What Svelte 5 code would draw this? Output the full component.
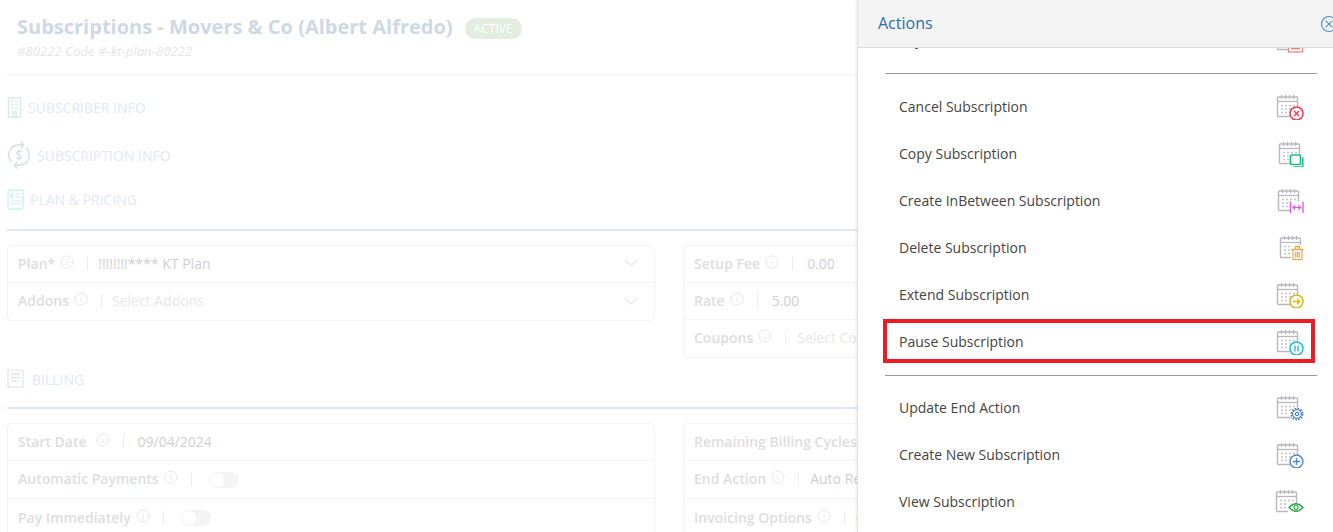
<script>
  const planLeft = [
    { label: 'Plan*', value: '!!!!!!!!**** KT Plan', select: true },
    { label: 'Addons', placeholder: 'Select Addons', select: true }
  ];
  const planRight = [
    { label: 'Setup Fee', value: '0.00', num: true },
    { label: 'Rate', value: '5.00', num: true },
    { label: 'Coupons', placeholder: 'Select Coupons' }
  ];
  const billLeft = [
    { label: 'Start Date', value: '09/04/2024', num: true, spaced: true },
    { label: 'Automatic Payments', toggle: true },
    { label: 'Pay Immediately', toggle: true }
  ];
  const billRight = [
    { label: 'Remaining Billing Cycles', value: '12' },
    { label: 'End Action', value: 'Auto Renew' },
    { label: 'Invoicing Options', value: 'Consolidated' }
  ];

  const firstGroup = [
    { name: 'Cancel Subscription', kind: 'cancel', dx: 0 },
    { name: 'Copy Subscription', kind: 'copy', dx: 2 },
    { name: 'Create InBetween Subscription', kind: 'between', dx: 1 },
    { name: 'Delete Subscription', kind: 'delete', dx: 3 },
    { name: 'Extend Subscription', kind: 'extend', dx: 0 },
    { name: 'Pause Subscription', kind: 'pause', dx: 0, marked: true }
  ];
  const secondGroup = [
    { name: 'Update End Action', kind: 'update', dx: 0 },
    { name: 'Create New Subscription', kind: 'create', dx: 0 },
    { name: 'View Subscription', kind: 'view', dx: -1 }
  ];
</script>

{#snippet info(spaced)}
  <svg class="info" class:spaced width="14" height="14" viewBox="0 0 14 14">
    <circle cx="7" cy="7" r="6" fill="none" stroke="#e8e8e8" />
    <path d="M7 6v4.500M7 3.500v1.200" stroke="#e8e8e8" fill="none" />
  </svg>
{/snippet}

{#snippet fields(rows, tall)}
  <div class="box" class:tall>
    {#each rows as row}
      <div class="field">
        <span class="label">{row.label}</span>
        {@render info(row.spaced)}
        <span class="divider" class:num={row.num} class:select={row.select}></span>
        {#if row.toggle}
          <span class="toggle"><span class="knob"></span></span>
        {:else if row.placeholder}
          <span class="placeholder">{row.placeholder}</span>
        {:else}
          <span class="value">{row.value}</span>
        {/if}
        {#if row.select}
          <svg class="chevron" width="14" height="8" viewBox="0 0 14 8">
            <path d="M1 1l6 6 6-6" fill="none" stroke="#e8e8e8" stroke-width="1.2" />
          </svg>
        {/if}
      </div>
    {/each}
  </div>
{/snippet}

{#snippet actionIcon(kind, dx)}
  <svg class="cal" width="32" height="27" viewBox="0 0 32 27">
    <g transform="translate({dx} 0)">
      <rect x="3.5" y="4" width="20" height="19.5" rx="1" fill="#fff" stroke="#b8b8be" stroke-width="1.4" />
      <path d="M3.5 8.5h20" stroke="#b8b8be" stroke-width="1.3" />
      <path d="M7.5 2v4M11.5 2v4M15.5 2v4M19.5 2v4" stroke="#b8b8be" stroke-width="1.2" />
      <path d="M7 12.500h2M11 12.500h2M15 12.500h2M19 12.500h2M7 16h2M11 16h2M15 16h2M7 19.500h2M11 19.500h2" stroke="#c4c4ca" stroke-width="1.4" />

      {#if kind === 'invoice'}
        <rect x="14.500" y="10" width="14" height="16" fill="#fff" stroke="#f27d7d" stroke-width="1.200" />
        <path d="M17 22.500h9" stroke="#f27d7d" stroke-width="1.600" />
      {:else if kind === 'cancel'}
        <circle cx="22.500" cy="20.500" r="6.500" fill="#fff" stroke="#ee3b4d" stroke-width="1.500" />
        <path d="M20 18l5 5M25 18l-5 5" stroke="#ee3b4d" stroke-width="1.400" />
      {:else if kind === 'copy'}
        <rect x="14.500" y="15" width="10" height="9.500" rx="1.500" fill="#fff" stroke="#1fbb86" stroke-width="1.700" />
        <path d="M26.800 17.500v7.500a2 2 0 0 1-2 2h-7.500" fill="none" stroke="#1fbb86" stroke-width="1.500" />
      {:else if kind === 'between'}
        <rect x="15.500" y="14" width="12.500" height="12" fill="#fff" />
        <path d="M15.500 14.500v11.500M28 14.500v11.500" stroke="#e94fe6" stroke-width="1.300" />
        <path d="M18 20.500h7.500M20.200 18.300l-2.200 2.200 2.200 2.200M23.300 18.300l2.200 2.200-2.200 2.200" fill="none" stroke="#e94fe6" stroke-width="1.200" />
      {:else if kind === 'delete'}
        <rect x="14" y="11" width="14" height="15.500" fill="#fff" />
        <path d="M14.500 15.500h12M18.500 15v-2.500h4v2.500" fill="none" stroke="#f0a63c" stroke-width="1.400" />
        <path d="M16 16v9.500h9V16M18.700 18v5.500M20.500 18v5.500M22.300 18v5.500" fill="none" stroke="#f0a63c" stroke-width="1.200" />
      {:else if kind === 'extend'}
        <circle cx="22.500" cy="20.500" r="6.500" fill="#fff" stroke="#dcb61b" stroke-width="1.500" />
        <path d="M19 20.500h6.500M23 17.800l2.700 2.700-2.700 2.700" fill="none" stroke="#dcb61b" stroke-width="1.300" />
      {:else if kind === 'pause'}
        <circle cx="22.500" cy="20.500" r="6.500" fill="#fff" stroke="#25bcdc" stroke-width="1.500" />
        <path d="M21 17.500v6M24 17.500v6" fill="none" stroke="#25bcdc" stroke-width="1.400" />
      {:else if kind === 'update'}
        <circle cx="23" cy="20" r="6.500" fill="#fff" />
        <circle cx="23" cy="20" r="5.600" fill="none" stroke="#2f6fcb" stroke-width="1.600" stroke-dasharray="1.500 1.430" />
        <circle cx="23" cy="20" r="4.300" fill="#fff" stroke="#2f6fcb" stroke-width="1" />
        <circle cx="23" cy="20" r="1.700" fill="none" stroke="#2f6fcb" stroke-width="1" />
      {:else if kind === 'create'}
        <circle cx="22.500" cy="20.500" r="6.500" fill="#fff" stroke="#4a86e0" stroke-width="1.400" />
        <path d="M22.500 17v7M19 20.500h7" stroke="#4a86e0" stroke-width="1.300" />
      {:else if kind === 'view'}
        <rect x="15" y="15" width="15" height="10" fill="#fff" />
        <path d="M16 19.500q7-7.500 14 0q-7 7.500-14 0z" fill="#fff" stroke="#2aa84a" stroke-width="1.400" />
        <circle cx="23" cy="19.500" r="2" fill="none" stroke="#2aa84a" stroke-width="1.200" />
      {/if}
    </g>
  </svg>
{/snippet}

{#snippet action(item)}
  <div class="action">
    <span>{item.name}</span>
    {@render actionIcon(item.kind, item.dx)}
    {#if item.marked}
      <div class="marker"></div>
    {/if}
  </div>
{/snippet}

<div class="page">
  <main class="content">
    <header class="title-block">
      <div class="title-row">
        <h1>Subscriptions - Movers &amp; Co (Albert Alfredo)</h1>
        <span class="badge">ACTIVE</span>
      </div>
      <p class="subtitle">#80222 Code #-kt-plan-80222</p>
    </header>

    <section class="sec">
      <svg width="15" height="21" viewBox="0 0 15 21">
        <path d="M1.500 20V1h12v19M.5 20.300h14" fill="none" stroke="#d7ece5" stroke-width="1.400" />
        <path d="M4 4h2M8.500 4h2M4 7.500h2M8.500 7.500h2M4 11h2M8.500 11h2M6 20v-5h3v5" fill="none" stroke="#d7ece5" stroke-width="1.600" />
      </svg>
      <span class="sec-name">SUBSCRIBER INFO</span>
    </section>

    <section class="sec">
      <svg width="24" height="30" viewBox="0 0 24 30">
        <path d="M5 22a10 10 0 0 1 3-16.500l8-1M13.500 1.500l3 3-2.500 3.500M19 8a10 10 0 0 1-3 16.500l-8 1M10.500 28.500l-3-3 2.500-3.500" fill="none" stroke="#cfe3e3" stroke-width="1.500" />
        <path d="M15 12q-3-2-5 0-1 2 2 3 3 1 2 3-2 2-5 0M12 9.500v11" fill="none" stroke="#cfe3e3" stroke-width="1.300" />
      </svg>
      <span class="sec-name">SUBSCRIPTION INFO</span>
    </section>

    <section class="sec short">
      <svg width="17" height="21" viewBox="0 0 17 21">
        <rect x="1" y="1" width="15" height="19" rx="1.500" fill="none" stroke="#cdeffb" stroke-width="1.300" />
        <path d="M9 5h4.500M9 8h4.500M3.500 12h10M3.500 15h10M3.500 4.500h3v2h-3v2h3" fill="none" stroke="#cdeffb" stroke-width="1.200" />
      </svg>
      <span class="sec-name">PLAN &amp; PRICING</span>
    </section>

    <div class="rule first-rule"></div>
    <div class="columns">
      {@render fields(planLeft, false)}
      {@render fields(planRight, false)}
    </div>

    <section class="sec billing">
      <svg width="17" height="20" viewBox="0 0 17 20">
        <path d="M1 1h15v17.500l-2.500-1-2.500 1-2.500-1-2.500 1-2.500-1-2.500 1z" fill="none" stroke="#dde6f7" stroke-width="1.200" />
        <path d="M4 5h9M4 8.500h9M4 12h6" stroke="#dde6f7" stroke-width="1.300" />
      </svg>
      <span class="sec-name">BILLING</span>
    </section>

    <div class="rule second-rule"></div>
    <div class="columns">
      {@render fields(billLeft, true)}
      {@render fields(billRight, true)}
    </div>
  </main>

  <aside class="drawer">
    <div class="drawer-head">
      <h2>Actions</h2>
      <svg class="close" width="18" height="18" viewBox="0 0 18 18">
        <circle cx="9" cy="9" r="7.500" fill="none" stroke="#4d93cf" stroke-width="1.200" />
        <path d="M5.800 5.800l6.400 6.400M12.200 5.800l-6.400 6.400" stroke="#4d93cf" stroke-width="1.200" />
      </svg>
    </div>
    <div class="drawer-body">
      <div class="actions">
        {@render action({ name: 'Pay Invoice', kind: 'invoice', dx: 0 })}
        <hr />
        {#each firstGroup as item}
          {@render action(item)}
        {/each}
        <hr />
        {#each secondGroup as item}
          {@render action(item)}
        {/each}
      </div>
    </div>
  </aside>
</div>

<style>
  :global(body) {
    background: #fff;
    font-family: "Open Sans", "Liberation Sans", sans-serif;
  }
  .page {
    position: relative;
    width: 1333px;
    height: 532px;
    overflow: hidden;
    background: #fff;
  }
  .content {
    width: 1400px;
    padding-left: 7px;
    box-sizing: border-box;
  }
  .title-block {
    padding: 16px 10px 14px;
    margin-bottom: 7px;
    border-bottom: 2px solid #f7f7f7;
  }
  .title-row {
    display: flex;
    align-items: center;
    height: 22px;
    gap: 12px;
  }
  h1 {
    margin: 0;
    font-size: 20px;
    line-height: 22px;
    font-weight: 700;
    color: #ced9e6;
  }
  .badge {
    display: flex;
    align-items: center;
    height: 21px;
    margin-top: 2px;
    padding: 0 9px;
    border-radius: 11px;
    background: #e2ecdf;
    color: #fff;
    font-size: 12px;
  }
  .subtitle {
    margin: 4px 0 0;
    line-height: 18px;
    font-size: 13px;
    letter-spacing: 0.1px;
    font-style: italic;
    color: #e6e6e6;
  }
  .sec {
    display: flex;
    align-items: center;
    gap: 6px;
    height: 48px;
  }
  .sec.short {
    height: 40px;
  }
  .sec.billing {
    height: 42px;
    gap: 8px;
  }
  .sec-name {
    font-size: 14px;
    color: #e1e8f8;
  }
  .rule {
    width: 1340px;
    height: 2px;
    background: #dfe8f6;
  }
  .first-rule {
    margin-top: 10px;
    margin-bottom: 14px;
  }
  .second-rule {
    margin-top: 7px;
    margin-bottom: 14px;
  }
  .columns {
    display: grid;
    grid-template-columns: 648px 648px;
    gap: 28px;
    align-items: start;
  }
  .box {
    border: 1px solid #f4f4f4;
    border-radius: 4px;
  }
  .field {
    display: flex;
    align-items: center;
    box-sizing: border-box;
    height: 37px;
    padding: 0 16px 2px 10px;
    font-size: 14px;
    border-bottom: 1px solid #f4f4f4;
  }
  .field:last-child {
    border-bottom: 0;
  }
  .box.tall .field + .field {
    height: 38px;
  }
  .label {
    font-weight: 600;
    color: #dedede;
  }
  .info {
    margin: 0 0 3px 5px;
  }
  .info.spaced {
    margin-left: 9px;
  }
  .divider {
    width: 1px;
    height: 14px;
    margin: 0 11px 0 13px;
    background: #eeeeee;
  }
  .divider.select {
    margin-right: 10px;
  }
  .divider.num {
    margin-right: 14px;
  }
  .value {
    color: #cfcfcf;
  }
  .placeholder {
    color: #e8e8e8;
  }
  .chevron {
    margin-left: auto;
  }
  .toggle {
    display: block;
    width: 30px;
    height: 16px;
    margin: 2px 0 0 6px;
    border-radius: 8px;
    background: #f4f4f4;
  }
  .knob {
    display: block;
    width: 14px;
    height: 14px;
    margin: 1px;
    border-radius: 50%;
    background: #fff;
  }
  .drawer {
    position: absolute;
    top: 0;
    left: 857px;
    width: 490px;
    height: 532px;
    display: flex;
    flex-direction: column;
    background: #fff;
    border-left: 1px solid #e2e2e2;
    box-shadow: -1px 0 3px rgba(0, 0, 0, 0.08);
  }
  .drawer-head {
    flex: none;
    display: flex;
    align-items: center;
    height: 47px;
    padding: 0 10px 0 20px;
    background: #f3f3f3;
    border-bottom: 1px solid #dcdcdc;
    position: relative;
    z-index: 1;
  }
  h2 {
    margin: 0 0 2px;
    font-size: 16px;
    font-weight: 400;
    color: #2a6fb0;
  }
  .close {
    margin-left: auto;
  }
  .drawer-body {
    flex: 1;
    overflow: hidden;
  }
  .actions {
    width: 432px;
    margin: -32px 0 0 27px;
  }
  .actions hr {
    height: 1px;
    margin: 10px 0 8px;
    border: 0;
    background: #999;
  }
  .actions hr:first-of-type {
    margin-bottom: 9px;
  }
  .action {
    position: relative;
    display: flex;
    align-items: center;
    justify-content: space-between;
    height: 47px;
    padding: 0 11px 0 14px;
    font-size: 14px;
    color: #444;
  }
  .marker {
    position: absolute;
    top: 1px;
    left: -2px;
    right: 2px;
    height: 44px;
    box-sizing: border-box;
    border: 4px solid #ed1c24;
  }
</style>
